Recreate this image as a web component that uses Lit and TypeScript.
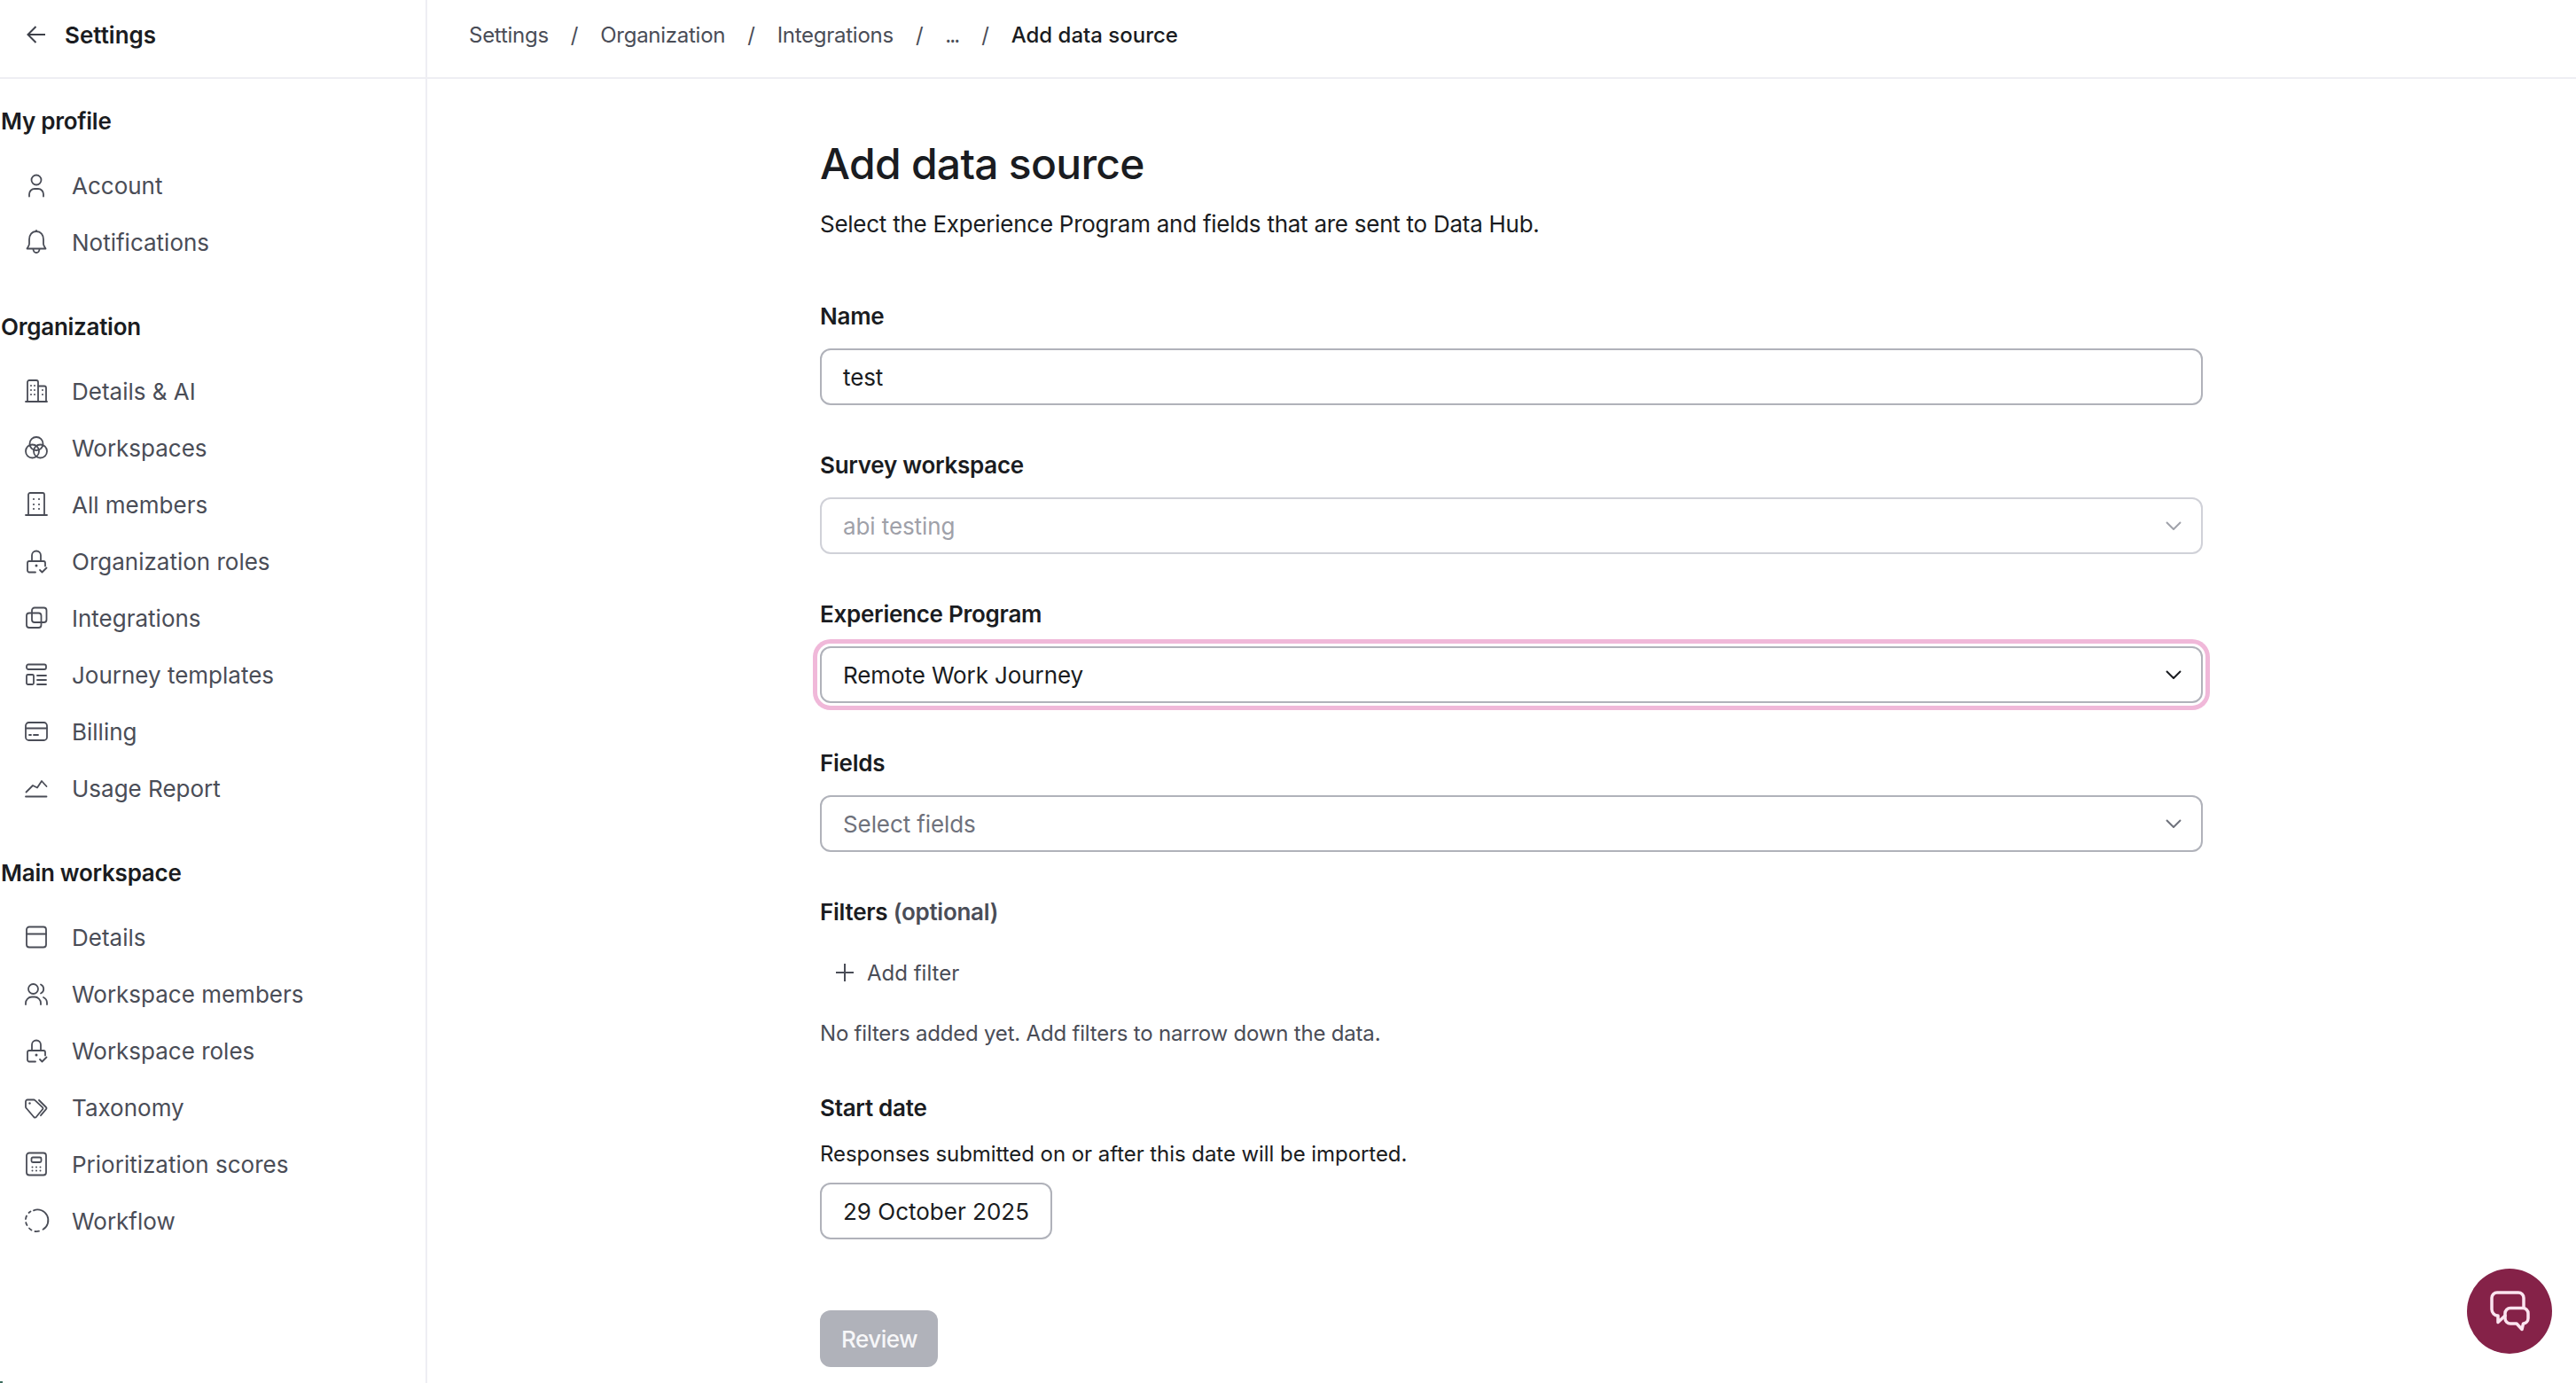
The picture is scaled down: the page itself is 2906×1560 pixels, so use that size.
import { LitElement, css, html, svg } from 'lit';
import { customElement } from 'lit/decorators.js';

const lockCheck = svg`<path d="M11 16v-6.500a5 5 0 0 1 10 0V16"/><path d="M15 28.500H8a2 2 0 0 1-2-2V18a2 2 0 0 1 2-2h16a2 2 0 0 1 2 2v3.500"/><circle class="dot" cx="16" cy="21" r="1.500"/><path d="M20 26l2.500 2.500 5-5"/>`;

const icons: Record<string, unknown> = {
    account: svg`<circle cx="16" cy="10" r="5.500"/><path d="M8 28.500V26a6 6 0 0 1 6-6h4a6 6 0 0 1 6 6v2.500"/>`,
    bell: svg`<path d="M16 4c-5 0-8 4-8 9v5c0 2-1 3-2.500 5.500h21C25 21 24 20 24 18v-5c0-5-3-9-8-9z"/><path d="M12.500 24a3.500 4 0 0 0 7 0"/><path d="M16 4V3"/>`,
    buildings: svg`<path d="M4 28h24"/><path d="M6 28V6a2 2 0 0 1 2-2h8a2 2 0 0 1 2 2v22"/><path d="M18 10.500h7a2 2 0 0 1 2 2V28"/><circle class="dot" cx="10" cy="10" r="1"/><circle class="dot" cx="14" cy="10" r="1"/><circle class="dot" cx="10" cy="15" r="1"/><circle class="dot" cx="14" cy="15" r="1"/><circle class="dot" cx="10" cy="20" r="1"/><circle class="dot" cx="14" cy="20" r="1"/><circle class="dot" cx="23" cy="15" r="1"/><circle class="dot" cx="23" cy="20" r="1"/>`,
    circles: svg`<circle cx="16" cy="11.500" r="7.500"/><circle cx="11.500" cy="20" r="7.500"/><circle cx="20.500" cy="20" r="7.500"/>`,
    building: svg`<path d="M4 28h24"/><path d="M7 28V5a2 2 0 0 1 2-2h14a2 2 0 0 1 2 2v23"/><circle class="dot" cx="13" cy="10" r="1.100"/><circle class="dot" cx="19" cy="10" r="1.100"/><circle class="dot" cx="13" cy="16" r="1.100"/><circle class="dot" cx="19" cy="16" r="1.100"/><circle class="dot" cx="13" cy="21" r="1.100"/><circle class="dot" cx="19" cy="21" r="1.100"/>`,
    lock: lockCheck,
    stack: svg`<rect x="5" y="10.500" width="16.500" height="16.500" rx="3"/><rect x="11" y="4.500" width="16.500" height="16.500" rx="3"/>`,
    template: svg`<rect x="5" y="4.500" width="22" height="5.500" rx="2"/><rect x="5" y="16" width="8" height="11" rx="1.500"/><path d="M17 17h10M17 22h10M17 27h10"/>`,
    card: svg`<rect x="4" y="6" width="24" height="20" rx="3.500"/><path d="M4 12.500h24"/><path d="M8 20h2M13 20h5"/>`,
    chart: svg`<path d="M4.500 20.500l7.500-7.500 5 2.500 5-7.500 5.500 6"/><path d="M4 25.500h23.500"/>`,
    window: svg`<rect x="5" y="4.500" width="22" height="23" rx="3"/><path d="M5 12.500h22"/>`,
    people: svg`<circle cx="12.500" cy="10.500" r="5.500"/><path d="M4 28v-1.500a7 7 0 0 1 7-7h3a7 7 0 0 1 7 7V28"/><path d="M21 5.500a5.500 5.500 0 0 1 0 10"/><path d="M24 20a7 7 0 0 1 4 6v2"/>`,
    tag: svg`<path d="M4 9.500a2 2 0 0 1 2-2h7a2 2 0 0 1 1.500.6l8.500 8a1.500 1.500 0 0 1 0 2.200l-7 8.500a2 2 0 0 1-2.800.2L4.700 17a2 2 0 0 1-.7-1.500z"/><circle class="dot" cx="8.500" cy="11.500" r="1.200"/><path d="M19 8l8 8a1.500 1.500 0 0 1 0 2.200l-6 7"/>`,
    calculator: svg`<rect x="5" y="3.500" width="22" height="25" rx="3"/><rect x="10.500" y="8.500" width="11" height="5.500" rx="1.500"/><circle class="dot" cx="11.500" cy="19.500" r="1"/><circle class="dot" cx="16" cy="19.500" r="1"/><circle class="dot" cx="20.500" cy="19.500" r="1"/><circle class="dot" cx="11.500" cy="23.500" r="1"/><circle class="dot" cx="16" cy="23.500" r="1"/><circle class="dot" cx="20.500" cy="23.500" r="1"/>`,
    dashed: svg`<path d="M13 4.300a12 12 0 0 1 10.500 21.500"/><path d="M19 27.700a12 12 0 0 1-4.500.3"/><path d="M10.500 26.500a12 12 0 0 1-2.500-2"/><path d="M5.500 21a12 12 0 0 1-1.300-3"/><path d="M4 14a12 12 0 0 1 1-3.500"/><path d="M7.500 7a12 12 0 0 1 2-1.500"/>`,
};

const nav = [
    { title: 'My profile', items: [['account', 'Account'], ['bell', 'Notifications']] },
    {
        title: 'Organization',
        items: [
            ['buildings', 'Details & AI'],
            ['circles', 'Workspaces'],
            ['building', 'All members'],
            ['lock', 'Organization roles'],
            ['stack', 'Integrations'],
            ['template', 'Journey templates'],
            ['card', 'Billing'],
            ['chart', 'Usage Report'],
        ],
    },
    {
        title: 'Main workspace',
        items: [
            ['window', 'Details'],
            ['people', 'Workspace members'],
            ['lock', 'Workspace roles'],
            ['tag', 'Taxonomy'],
            ['calculator', 'Prioritization scores'],
            ['dashed', 'Workflow'],
        ],
    },
];

const chevron = html`<svg class="chevron" viewBox="0 0 18 10"><path d="M1 1l8 8 8-8"/></svg>`;

@customElement('app-root')
export class AppRoot extends LitElement {
    static styles = css`
        :host {
            display: flex;
            height: 1560px;
            overflow: hidden;
            position: relative;
            background: #fff;
            color: #1a1c21;
            font-family: Inter, "Liberation Sans", sans-serif;
            font-size: 26px;
            letter-spacing: -0.01em;
        }

        .sidebar {
            flex: none;
            width: 480px;
            border-right: 2px solid #eeeef3;
        }

        .sidebar__head,
        .crumbs {
            box-sizing: border-box;
            height: 89px;
            padding-bottom: 9px;
            border-bottom: 2px solid #eeeef3;
            display: flex;
            align-items: center;
        }

        .sidebar__head {
            padding-left: 30px;
            gap: 21px;
            font-weight: 600;
            letter-spacing: 0;
        }

        .back {
            width: 22px;
            height: 20px;
            fill: none;
            stroke: #3d4049;
            stroke-width: 2;
        }

        .groups {
            padding: 32px 0 0 1px;
            display: flex;
            flex-direction: column;
            gap: 48px;
        }

        .group__title {
            line-height: 32px;
            font-weight: 600;
            margin-bottom: 24px;
        }

        .row {
            height: 64px;
            padding-left: 24px;
            display: flex;
            align-items: center;
            gap: 24px;
            color: #4a4d57;
            letter-spacing: 0;
        }

        .icon {
            flex: none;
            width: 32px;
            height: 32px;
            fill: none;
            stroke: #4a4d57;
            stroke-width: 1.800;
            stroke-linecap: round;
            stroke-linejoin: round;
        }

        .icon .dot {
            fill: #4a4d57;
            stroke: none;
        }

        .main {
            flex: 1;
            min-width: 0;
        }

        .crumbs {
            padding-left: 47px;
            gap: 25px;
            color: #4a4d57;
            font-size: 24px;
        }

        .crumbs b {
            font-weight: 500;
            color: #1a1c21;
            letter-spacing: 0;
        }

        .crumbs .more {
            letter-spacing: -0.08em;
            margin-right: 1px;
        }

        .form {
            width: 1560px;
            margin-left: 443px;
            padding-top: 64px;
            display: flex;
            flex-direction: column;
        }

        h1 {
            margin: 0;
            font-size: 48px;
            line-height: 64px;
            font-weight: 500;
            letter-spacing: -0.015em;
        }

        .lead {
            margin: 16px 0 68px;
            line-height: 40px;
        }

        .fields {
            display: flex;
            flex-direction: column;
            gap: 52px;
        }

        .label {
            line-height: 32px;
            font-weight: 600;
            margin-bottom: 20px;
        }

        .label span {
            color: #4a4d57;
        }

        .control {
            box-sizing: border-box;
            height: 64px;
            padding: 0 22px 0 24px;
            border: 2px solid #b0b2ba;
            border-radius: 12px;
            background: #fff;
            display: flex;
            align-items: center;
            justify-content: space-between;
            letter-spacing: -0.1px;
        }

        .control.disabled {
            border-color: #d0d1d8;
            color: #9fa1a9;
        }

        .control.focus {
            box-shadow: 0 0 0 3px #fff, 0 0 0 8px #f0b8d9;
        }

        .control.placeholder {
            color: #6f727c;
        }

        .chevron {
            flex: none;
            width: 18px;
            height: 10px;
            fill: none;
            stroke: #6f727c;
            stroke-width: 2;
        }

        .disabled .chevron {
            stroke: #a0a2aa;
        }

        .focus .chevron {
            stroke: #1a1c21;
        }

        .add {
            height: 64px;
            padding-left: 17px;
            display: flex;
            align-items: center;
            gap: 14px;
            color: #4a4d57;
            font-size: 24px;
            letter-spacing: 0;
        }

        .add svg {
            width: 22px;
            height: 22px;
            fill: none;
            stroke: #4a4d57;
            stroke-width: 2;
        }

        .hint {
            margin-top: 21px;
            line-height: 32px;
            font-size: 24px;
            color: #4a4d57;
            letter-spacing: -0.2px;
        }

        .desc {
            line-height: 32px;
            font-size: 24px;
            margin-bottom: 16px;
            letter-spacing: -0.06px;
        }

        .date {
            display: inline-flex;
            vertical-align: top;
            padding: 0 24px;
            letter-spacing: 0;
        }

        .review {
            align-self: flex-start;
            box-sizing: border-box;
            margin-top: 80px;
            height: 64px;
            width: 133px;
            padding-left: 24px;
            border-radius: 12px;
            background: #b0b2ba;
            color: #f7f7f9;
            display: flex;
            align-items: center;
            font-weight: 500;
            letter-spacing: -0.02em;
        }

        .chat {
            position: absolute;
            left: 2783px;
            top: 1431px;
            width: 96px;
            height: 96px;
            border-radius: 50%;
            background: #852248;
        }

        .chat svg {
            display: block;
            width: 96px;
            height: 96px;
            fill: none;
            stroke: #fbe4ef;
            stroke-width: 3.500;
            stroke-linecap: round;
            stroke-linejoin: round;
        }

        .corner {
            position: absolute;
            left: 0;
            bottom: 0;
            width: 3px;
            height: 2px;
            background: #3f6f60;
        }
    `;

    render() {
        return html`
            <aside class="sidebar">
                <div class="sidebar__head">
                    <svg class="back" viewBox="0 0 22 20"><path d="M21 10H1.500M10.500 1l-9 9 9 9"/></svg>
                    Settings
                </div>
                <div class="groups">
                    ${nav.map((group) => html`
                        <section>
                            <div class="group__title">${group.title}</div>
                            ${group.items.map(([icon, label]) => html`
                                <div class="row">
                                    <svg class="icon" viewBox="0 0 32 32">${icons[icon]}</svg>
                                    ${label}
                                </div>
                            `)}
                        </section>
                    `)}
                </div>
            </aside>
            <main class="main">
                <nav class="crumbs">
                    <span>Settings</span><span>/</span>
                    <span>Organization</span><span>/</span>
                    <span>Integrations</span><span>/</span>
                    <span class="more">...</span><span>/</span>
                    <b>Add data source</b>
                </nav>
                <div class="form">
                    <h1>Add data source</h1>
                    <p class="lead">Select the Experience Program and fields that are sent to Data Hub.</p>
                    <div class="fields">
                        <div>
                            <div class="label">Name</div>
                            <div class="control">test</div>
                        </div>
                        <div>
                            <div class="label">Survey workspace</div>
                            <div class="control disabled">abi testing ${chevron}</div>
                        </div>
                        <div>
                            <div class="label">Experience Program</div>
                            <div class="control focus">Remote Work Journey ${chevron}</div>
                        </div>
                        <div>
                            <div class="label">Fields</div>
                            <div class="control placeholder">Select fields ${chevron}</div>
                        </div>
                        <div>
                            <div class="label">Filters <span>(optional)</span></div>
                            <div class="add">
                                <svg viewBox="0 0 22 22"><path d="M11 1v20M1 11h20"/></svg>
                                Add filter
                            </div>
                            <div class="hint">No filters added yet. Add filters to narrow down the data.</div>
                        </div>
                        <div>
                            <div class="label">Start date</div>
                            <div class="desc">Responses submitted on or after this date will be imported.</div>
                            <div class="control date">29 October 2025</div>
                        </div>
                    </div>
                    <div class="review">Review</div>
                </div>
            </main>
            <div class="chat">
                <svg viewBox="0 0 96 96">
                    <path d="M43 53l-8 7.500V53a7 7 0 0 1-7-7V33a6 6 0 0 1 6-6h24a6 6 0 0 1 6 6v11"/>
                    <path d="M49 44.500h14a6 6 0 0 1 6 6V56a6 6 0 0 1-5.500 6l-1.500 6.500-6-6.500h-7a6 6 0 0 1-6-6v-5.500a6 6 0 0 1 6-6z"/>
                </svg>
            </div>
            <div class="corner"></div>
        `;
    }
}
